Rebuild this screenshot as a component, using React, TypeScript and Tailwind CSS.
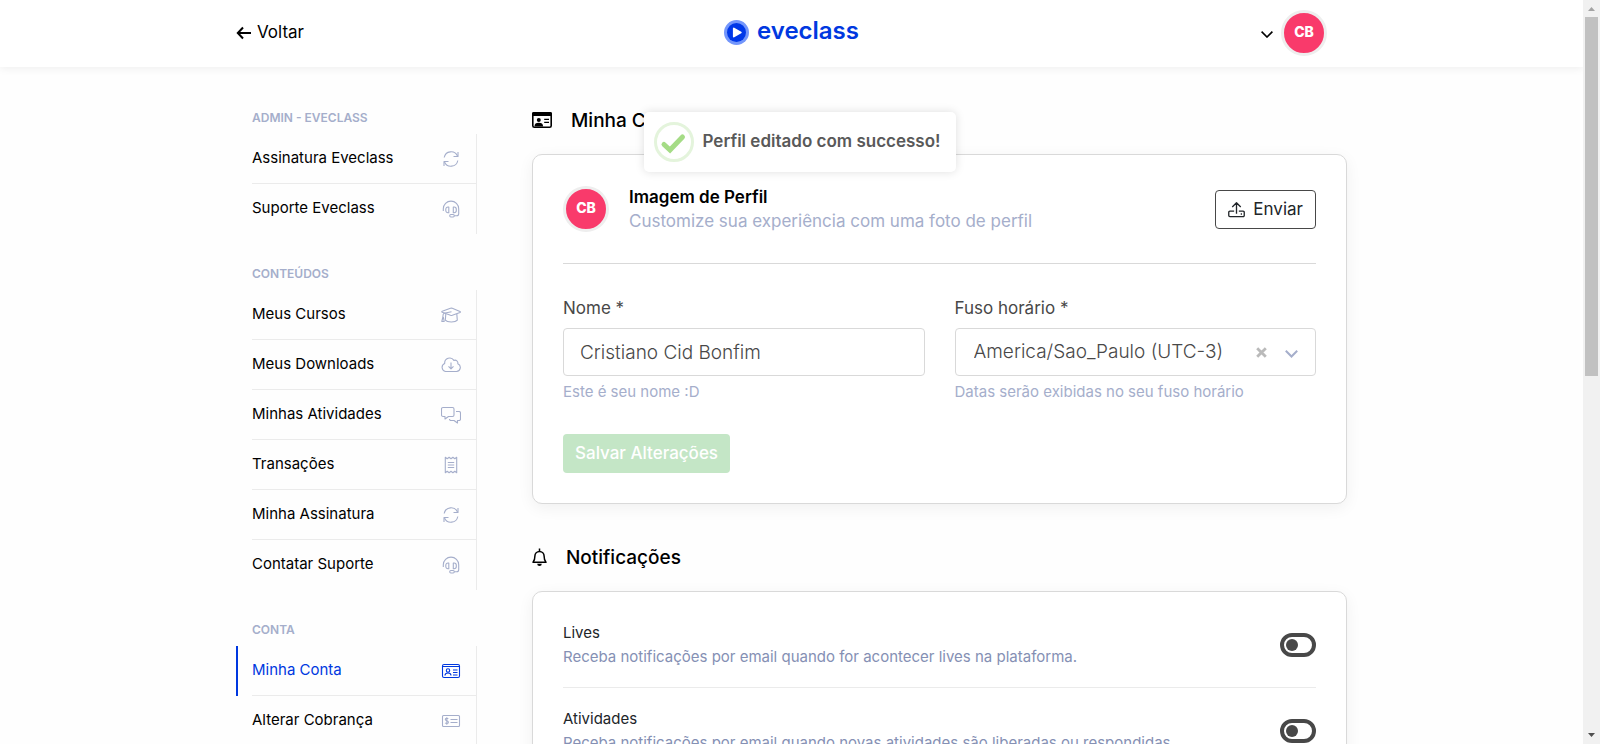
import { useState } from "react";
import type { ReactNode } from "react";

type IconName = "sync" | "headset" | "cap" | "cloud" | "chat" | "receipt" | "idCard" | "check";

const iconShapes: Record<IconName, ReactNode> = {
  sync: (
    <>
      <path d="M3.200 8.500A7 7 0 0 1 16.500 7M16.800 11.500A7 7 0 0 1 3.500 13" />
      <path d="M17 3v4.500h-4.500M3 17v-4.500h4.500" />
    </>
  ),
  headset: (
    <>
      <path d="M2.300 12V9.800a7.700 7.700 0 0 1 15.400 0v5a2 2 0 0 1-2 2h-2.400" />
      <rect x="8.700" y="15.500" width="4.600" height="2.500" rx="1.200" />
      <path d="M7.800 8h-.8a2.200 2.200 0 0 0-2.200 2.200v1.300a2.200 2.200 0 0 0 2.200 2.200h.8zM12.300 8h.8a2.200 2.200 0 0 1 2.200 2.200v1.300a2.200 2.200 0 0 1-2.200 2.200h-.8z" />
    </>
  ),
  cap: (
    <>
      <path d="M9.500 3.300 1.200 6.200Q.3 6.700 1.200 7.300l8.300 3q.9.300 1.800 0l7.700-2.800q.9-.5 0-1L11.300 3.300q-.9-.3-1.800 0z" />
      <path d="M4.800 9 4.300 15.200c1 1.200 3.200 1.800 6 1.800s5-.6 6-1.800L15.800 9" />
      <path d="M10.500 6.800 3 8.200Q1.800 8.800 1.900 12L.8 16.500h2.400L2.300 12" />
    </>
  ),
  cloud: (
    <>
      <path d="M4.500 16.500h11a4 4 0 0 0 1.300-7.700 2.900 2.900 0 0 0-3.900-3.400 5 5 0 0 0-9.200 3.100A4.200 4.200 0 0 0 4.500 16.500z" />
      <path d="M10 7.500v6M7.500 11.300l2.500 2.500 2.500-2.500" />
    </>
  ),
  chat: (
    <>
      <path d="M2 2.500h9.500a1.500 1.500 0 0 1 1.500 1.500v6a1.500 1.500 0 0 1-1.500 1.500H7.500L4 14v-2.500H2A1.500 1.500 0 0 1 .5 10V4A1.500 1.500 0 0 1 2 2.500z" />
      <path d="M15 6.500h3A1.500 1.500 0 0 1 19.500 8v6a1.500 1.500 0 0 1-1.500 1.500h-1.500V18L13 15.500h-3A1.500 1.500 0 0 1 8.500 14" />
    </>
  ),
  receipt: (
    <>
      <path d="M4.300 2.300 6.200 3.700 8.100 2.300 10 3.700l1.900-1.400 1.900 1.400 1.900-1.400v15.400l-1.900-1.400-1.900 1.400L10 16.300l-1.900 1.400-1.900-1.400-1.900 1.400z" />
      <path d="M6.800 7.500h6.400M6.800 10h6.400M6.800 12.500h6.400" />
    </>
  ),
  idCard: (
    <>
      <rect x="1.500" y="3.500" width="17" height="13" rx="1.500" />
      <path d="M1.500 5.500h17M12 9h4.500M12 11.500h4.500M12 14h4.500M4 14.500c0-1.800 1-2.500 3-2.500s3 .7 3 2.500" />
      <circle cx="7" cy="9.500" r="1.700" />
    </>
  ),
  check: (
    <>
      <rect x="1.500" y="4.500" width="17" height="11" rx="1" />
      <path d="M9.500 8.500h7M9.500 11.500h7M7.300 7.800c-1-.9-3-.7-3 .7 0 1.600 3.100 1 3.100 2.700 0 1.500-2.300 1.600-3.300.6M5.800 6.300v7.400" />
    </>
  ),
};

function Icon({ name }: { name: IconName }) {
  return (
    <svg
      viewBox="0 0 20 20"
      className="size-5 shrink-0"
      fill="none"
      stroke="currentColor"
      strokeWidth="1.100"
      strokeLinejoin="round"
      aria-hidden="true"
    >
      {iconShapes[name]}
    </svg>
  );
}

const groups: { title: string; items: { label: string; icon: IconName; active?: boolean }[] }[] = [
  {
    title: "ADMIN - EVECLASS",
    items: [
      { label: "Assinatura Eveclass", icon: "sync" },
      { label: "Suporte Eveclass", icon: "headset" },
    ],
  },
  {
    title: "CONTEÚDOS",
    items: [
      { label: "Meus Cursos", icon: "cap" },
      { label: "Meus Downloads", icon: "cloud" },
      { label: "Minhas Atividades", icon: "chat" },
      { label: "Transações", icon: "receipt" },
      { label: "Minha Assinatura", icon: "sync" },
      { label: "Contatar Suporte", icon: "headset" },
    ],
  },
  {
    title: "CONTA",
    items: [
      { label: "Minha Conta", icon: "idCard", active: true },
      { label: "Alterar Cobrança", icon: "check" },
    ],
  },
];

function Sidebar() {
  return (
    <nav className="w-[241px] shrink-0 pt-[11px]" aria-label="Menu da conta">
      {groups.map((group) => (
        <section key={group.title}>
          <h2 className="flex h-14 items-end pb-[6px] pl-4 text-xs leading-5 font-semibold text-[#a5aecb]">
            {group.title}
          </h2>
          <ul className="border-r border-[#ebebeb]">
            {group.items.map((item, i) => (
              <li key={item.label}>
                <a
                  href="#"
                  aria-current={item.active ? "page" : undefined}
                  className={
                    item.active
                      ? "flex h-[50px] border-l-2 border-[#0038e0] pl-[14px] text-[#0038e0]"
                      : "flex h-[50px] pl-4 text-black"
                  }
                >
                  <span
                    className={
                      i < group.items.length - 1
                        ? "flex flex-1 items-center justify-between border-b border-[#ebebeb] pr-[15px]"
                        : "flex flex-1 items-center justify-between pr-[15px]"
                    }
                  >
                    <span className="pb-[2px] text-[15px] leading-6">{item.label}</span>
                    <span className={item.active ? "flex" : "flex text-[#a5aecb]"}>
                      <Icon name={item.icon} />
                    </span>
                  </span>
                </a>
              </li>
            ))}
          </ul>
        </section>
      ))}
    </nav>
  );
}

function Avatar() {
  return (
    <span className="flex size-[46px] shrink-0 items-center justify-center rounded-full border-[3px] border-[#eeeeee] bg-[#f93a6b] pb-[2px] text-sm font-extrabold text-white">
      CB
    </span>
  );
}

function Header() {
  return (
    <header className="relative bg-white shadow-[0_2px_8px_rgba(0,0,0,0.06)]">
      <div className="mx-auto grid h-[67px] max-w-[1141px] grid-cols-[1fr_auto_1fr] items-center px-[15px] pb-[2px]">
        <a href="#" className="flex items-center gap-[6px] text-[17px] text-black">
          <svg viewBox="0 0 15 14" className="h-[14px] w-[15px]" fill="none" stroke="currentColor" strokeWidth="2" aria-hidden="true">
            <path d="M7 1.500 1.800 7 7 12.500M2 7h13" />
          </svg>
          Voltar
        </a>
        <a href="#" className="flex items-center gap-2 text-2xl font-semibold text-[#0038e0]">
          <svg viewBox="0 0 25 25" className="size-[25px]" aria-hidden="true">
            <circle cx="12.500" cy="12.500" r="12.500" fill="#7396fb" />
            <circle cx="12.500" cy="12.500" r="9.500" fill="#0038e8" />
            <path d="M9.800 8.500v8l7-4z" fill="#fff" stroke="#fff" strokeWidth="1.800" strokeLinejoin="round" />
          </svg>
          <span className="pb-1">eveclass</span>
        </a>
        <button type="button" aria-label="Menu do usuário" className="flex items-center gap-2 justify-self-end pr-5">
          <svg viewBox="0 0 12 7" className="mt-[3px] h-[7px] w-3" fill="none" stroke="#000" strokeWidth="1.600" aria-hidden="true">
            <path d="M.6.6 6 6 11.400.6" />
          </svg>
          <Avatar />
        </button>
      </div>
    </header>
  );
}

function Toggle({ label, description }: { label: string; description: string }) {
  const [on, setOn] = useState(false);
  return (
    <label className="flex h-[86px] items-center justify-between border-b border-[#ebebeb]">
      <span className="text-[15px] leading-6">
        <span className="block text-[#212529]">{label}</span>
        <span className="block text-[#8590b4]">{description}</span>
      </span>
      <input
        type="checkbox"
        checked={on}
        onChange={(e) => setOn(e.target.checked)}
        className="h-6 w-9 shrink-0 appearance-none rounded-full border-4 border-[#484848] p-[2px] before:block before:size-3 before:rounded-full before:bg-[#484848] checked:before:ml-3"
      />
    </label>
  );
}

const card = "rounded-[10px] border border-[#d9d9d9] bg-white px-[30px] shadow-[0_4px_16px_rgba(0,0,0,0.06)]";

function Account() {
  const [name, setName] = useState("Cristiano Cid Bonfim");
  return (
    <section>
      <h2 className="flex h-7 items-center gap-[19px] text-[19px] font-medium text-black">
        <svg viewBox="0 0 20 16" className="h-4 w-5" aria-hidden="true">
          <rect x=".8" y=".8" width="18.400" height="14.400" rx="1.500" fill="none" stroke="#000" strokeWidth="1.600" />
          <path d="M0 1.500Q0 0 1.500 0h17Q20 0 20 1.500V4H0zM2.500 14.500c0-2.800 1.500-3.800 4.300-3.800s4.300 1 4.300 3.800z" />
          <circle cx="6.800" cy="7.900" r="2" />
          <path d="M12.200 7.300H17M12.200 10.300H17" stroke="#000" strokeWidth="1.300" />
        </svg>
        <span className="pt-[2px]">Minha Conta</span>
      </h2>
      <div className={`${card} mt-5 pb-[30px]`}>
        <div className="flex h-[109px] items-center gap-5 border-b border-[#d9d9d9]">
          <Avatar />
          <div className="flex-1 text-[17px] leading-6">
            <h3 className="font-semibold text-black">Imagem de Perfil</h3>
            <p className="text-[#a5aecb]">Customize sua experiência com uma foto de perfil</p>
          </div>
          <button type="button" className="flex h-[39px] items-center gap-2 rounded border border-[#484848] px-3 text-[17px] text-[#212529]">
            <svg viewBox="0 0 18 17" className="h-[17px] w-[17px]" fill="none" stroke="currentColor" strokeWidth="1.400" strokeLinejoin="round" aria-hidden="true">
              <path d="M9 13V1.500M4.500 5.800 9 1.300l4.500 4.500M6.500 10.300H2a1.200 1.200 0 0 0-1.200 1.200v3.300A1.200 1.200 0 0 0 2 16h14a1.200 1.200 0 0 0 1.200-1.200v-3.300a1.200 1.200 0 0 0-1.200-1.200h-4.500M13.500 13.300h1.300" />
            </svg>
            <span className="pt-[2px]">Enviar</span>
          </button>
        </div>
        <form onSubmit={(e) => e.preventDefault()}>
          <div className="grid grid-cols-2 gap-[30px] pt-8">
            <div>
              <label htmlFor="nome" className="block text-[17px] leading-6 text-[#484848]">Nome *</label>
              <input
                id="nome"
                value={name}
                onChange={(e) => setName(e.target.value)}
                className="mt-2 block h-12 w-full rounded border border-[#d9d9d9] px-4 text-[19px] font-light text-[#484848]"
              />
              <p className="mt-1 text-[15px] leading-6 text-[#a5aecb]">Este é seu nome :D</p>
            </div>
            <div>
              <label htmlFor="fuso" className="block text-[17px] leading-6 text-[#484848]">Fuso horário *</label>
              <div className="mt-2 flex h-12 items-center rounded border border-[#d9d9d9] pr-[17px] pl-[18px]">
                <select id="fuso" className="h-full min-w-0 flex-1 appearance-none bg-transparent text-[19px] font-light text-[#484848]">
                  <option>America/Sao_Paulo (UTC-3)</option>
                </select>
                <button type="button" aria-label="Limpar" className="mr-[18px]">
                  <svg viewBox="0 0 11 11" className="size-[11px]" stroke="#bababa" strokeWidth="2.800" aria-hidden="true">
                    <path d="M1.200 1.200l8.600 8.600M9.800 1.200 1.200 9.800" />
                  </svg>
                </button>
                <svg viewBox="0 0 13 8" className="mt-1 h-2 w-[13px]" fill="none" stroke="#a5aecb" strokeWidth="2" aria-hidden="true">
                  <path d="M.8.8l5.700 5.700L12.200.8" />
                </svg>
              </div>
              <p className="mt-1 text-[15px] leading-6 text-[#a5aecb]">Datas serão exibidas no seu fuso horário</p>
            </div>
          </div>
          <button type="submit" disabled className="mt-[30px] h-[39px] rounded bg-[#c4e6c6] px-3 text-[17px] font-medium text-white">
            Salvar Alterações
          </button>
        </form>
      </div>
    </section>
  );
}

function Notifications() {
  return (
    <section>
      <h2 className="mt-[39px] flex h-7 items-center gap-[19px] text-[19px] font-medium text-black">
        <svg viewBox="0 0 15 18" className="h-[18px] w-[15px]" aria-hidden="true">
          <path d="M1 14.200c1.500-1.500 1.900-3 1.900-6.200a4.600 4.600 0 0 1 9.200 0c0 3.200.4 4.700 1.900 6.200zM7.500 3.400V.6" fill="none" stroke="#000" strokeWidth="1.500" strokeLinejoin="round" />
          <path d="M5.200 15.700h4.600a2.300 2.300 0 0 1-4.600 0z" />
        </svg>
        <span className="pt-[2px]">Notificações</span>
      </h2>
      <div className={`${card} mt-5 pt-[10px]`}>
        <Toggle label="Lives" description="Receba notificações por email quando for acontecer lives na plataforma." />
        <Toggle label="Atividades" description="Receba notificações por email quando novas atividades são liberadas ou respondidas." />
      </div>
    </section>
  );
}

function Toast() {
  return (
    <div role="status" className="absolute top-28 left-1/2 flex h-[60px] w-[312px] -translate-x-[148px] items-center gap-[9px] rounded-[5px] bg-white pl-[10px] shadow-[0_0_10px_rgba(0,0,0,0.13)]">
      <svg viewBox="0 0 40 40" className="size-10 shrink-0" fill="none" aria-hidden="true">
        <circle cx="20" cy="20" r="18.500" stroke="#e4f4dc" strokeWidth="3" />
        <path d="M10 22.500l6 5.500L28.500 15" stroke="#a5dc86" strokeWidth="5" strokeLinecap="round" />
      </svg>
      <p className="text-[17px] font-semibold whitespace-nowrap text-[#595959]">Perfil editado com successo!</p>
    </div>
  );
}

function Scrollbar() {
  return (
    <div aria-hidden="true" className="flex w-[17px] shrink-0 flex-col items-center justify-between bg-[#f1f1f1]">
      <div className="flex h-[50.5%] w-full flex-col items-center">
        <svg viewBox="0 0 17 17" className="size-[17px] shrink-0">
          <path d="M5 11h7L8.500 7z" fill="#a3a3a3" />
        </svg>
        <div className="w-[13px] flex-1 bg-[#c1c1c1]" />
      </div>
      <svg viewBox="0 0 17 17" className="size-[17px] shrink-0">
        <path d="M5 6h7L8.500 10z" fill="#505050" />
      </svg>
    </div>
  );
}

export default function App() {
  return (
    <div className="flex h-screen overflow-hidden bg-[#fefefe] font-['Inter',sans-serif]">
      <div className="relative min-w-0 flex-1 overflow-hidden">
        <Header />
        <div className="mx-auto flex max-w-[1141px] gap-[55px] px-[15px]">
          <Sidebar />
          <main className="min-w-0 flex-1 pt-[39px]">
            <Account />
            <Notifications />
          </main>
        </div>
        <Toast />
      </div>
      <Scrollbar />
    </div>
  );
}
